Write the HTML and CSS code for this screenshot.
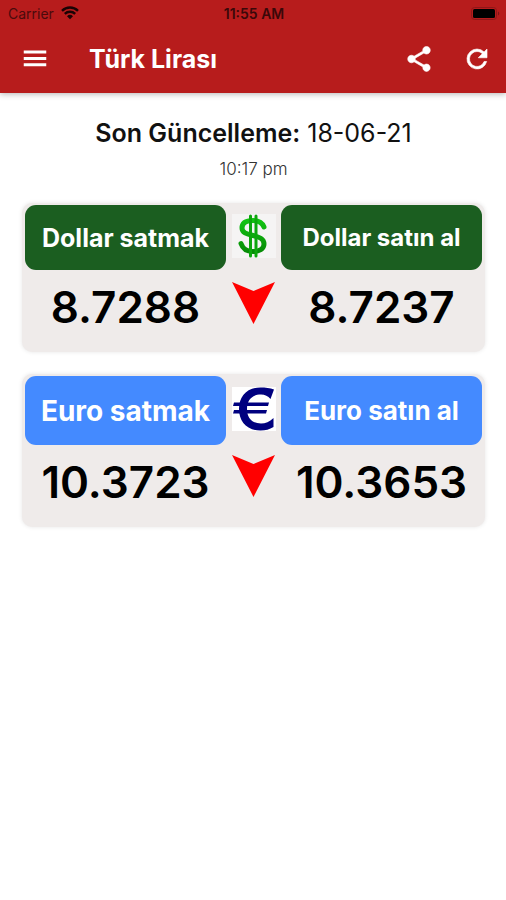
FILE: index.html
```html
<!DOCTYPE html>
<html lang="tr">
<head>
  <meta charset="UTF-8" />
  <meta name="viewport" content="width=device-width, initial-scale=1.0" />
  <title>Türk Lirası</title>
  <link rel="stylesheet" href="styles.css">
</head>
<body>
  <header class="header">
    <div class="status">
      <span class="carrier">
        Carrier
        <svg width="18" height="14" viewBox="0 0 18 14" aria-hidden="true">
          <path d="M1 4.800a11.500 11.500 0 0 1 16 0M3.800 7.800a7.500 7.500 0 0 1 10.400 0" fill="none" stroke="currentColor" stroke-width="2.400"/>
          <path d="M9 13.200L6 10.200a4.300 4.300 0 0 1 6 0z" fill="currentColor"/>
        </svg>
      </span>
      <span class="time">11:55 AM</span>
      <svg class="battery" width="29" height="13" viewBox="0 0 29 13" aria-hidden="true">
        <rect x="0.5" y="0.5" width="25" height="12" rx="3" fill="none" stroke="#8f1719"/>
        <rect x="2" y="2" width="22" height="9" rx="1.5" fill="#000"/>
        <path d="M27 4.5v4a2.2 2.2 0 0 0 0-4z" fill="#7f1417"/>
      </svg>
    </div>

    <div class="toolbar">
      <button class="icon-btn" aria-label="Menü">
        <svg width="30" height="30" viewBox="0 0 24 24"><path d="M3 17.800h18v-2.400H3zM3 12.700h18v-2.400H3zM3 5.200v2.400h18V5.200z"/></svg>
      </button>
      <h1>Türk Lirası</h1>
      <button class="icon-btn" aria-label="Paylaş">
        <svg class="bold" width="30" height="30" viewBox="0 0 24 24"><path d="M18 16.080c-.76 0-1.440.3-1.960.77L8.910 12.700c.05-.23.09-.46.09-.7s-.04-.47-.09-.7l7.050-4.110c.54.5 1.250.81 2.040.81 1.660 0 3-1.340 3-3s-1.340-3-3-3-3 1.340-3 3c0 .24.04.47.09.7L8.040 9.810C7.500 9.310 6.790 9 6 9c-1.660 0-3 1.340-3 3s1.340 3 3 3c.79 0 1.500-.31 2.040-.81l7.120 4.160c-.05.21-.08.43-.08.65 0 1.610 1.310 2.920 2.920 2.920s2.920-1.310 2.920-2.920-1.310-2.920-2.920-2.920z"/></svg>
      </button>
      <button class="icon-btn" aria-label="Yenile">
        <svg class="bold" width="30" height="30" viewBox="0 0 24 24"><path d="M17.650 6.350A7.958 7.958 0 0 0 12 4a8 8 0 1 0 7.730 10h-2.080A6 6 0 1 1 12 6c1.660 0 3.140.69 4.220 1.780L13 11h7V4l-2.350 2.350z"/></svg>
      </button>
    </div>
  </header>

  <main>
    <p class="updated"><strong>Son Güncelleme:</strong> 18-06-21</p>
    <p class="updated-time">10:17 pm</p>

    <section class="card card-dollar">
      <div class="side">
        <button class="btn btn-sell">Dollar satmak</button>
        <span class="rate">8.7288</span>
      </div>
      <div class="middle">
        <svg class="symbol" width="44" height="44" viewBox="0 0 44 44" role="img" aria-label="Dollar">
          <defs>
            <linearGradient id="green" x1="0" y1="0" x2="0" y2="1">
              <stop offset="0" stop-color="#12c312"/>
              <stop offset="1" stop-color="#078c07"/>
            </linearGradient>
          </defs>
          <path d="M32 13C30 8 26 6.500 21 6.500c-6 0-11 2-11 7.500 0 5 5 6 11 7.500s11 3 11 8.500c0 5-5 7.500-11 7.500-6 0-10-2-12-8" fill="none" stroke="url(#green)" stroke-width="5" stroke-linecap="round"/>
          <path d="M18.500 2v40M24 2v40" fill="none" stroke="#0ca60c" stroke-width="3" stroke-linecap="round"/>
        </svg>
        <svg class="arrow" width="43" height="43" viewBox="0 0 43 43" role="img" aria-label="Düşüş"><path d="M0 0l21.500 9L43 0 21.500 42z"/></svg>
      </div>
      <div class="side">
        <button class="btn btn-buy">Dollar satın al</button>
        <span class="rate">8.7237</span>
      </div>
    </section>

    <section class="card card-euro">
      <div class="side">
        <button class="btn btn-sell">Euro satmak</button>
        <span class="rate">10.3723</span>
      </div>
      <div class="middle">
        <svg class="symbol" width="44" height="44" viewBox="0 0 44 44" role="img" aria-label="Euro">
          <path d="M42 2.500L38.500 12C36 9 33 7.500 29 7.500 20 7.500 15 13 15 22s5 14.500 14 14.500c4.500 0 8.500-1.500 12.500-5.500v9c-4 2.500-8 3.500-13 3.500C14.500 43.500 7 34 7 22S14.500.5 28.500.5c5 0 9.500.5 13.500 2z" fill="#00007f"/>
          <path d="M2 15.500h35l-1 3.500H1zM2 23h33l-1 3.500H1z" fill="#00007f"/>
        </svg>
        <svg class="arrow" width="43" height="43" viewBox="0 0 43 43" role="img" aria-label="Düşüş"><path d="M0 0l21.500 9L43 0 21.500 42z"/></svg>
      </div>
      <div class="side">
        <button class="btn btn-buy">Euro satın al</button>
        <span class="rate">10.3653</span>
      </div>
    </section>
  </main>
</body>
</html>
```

FILE: styles.css
```css
* {
  box-sizing: border-box;
}

body {
  margin: 0;
  background: #fff;
  color: #111;
  font-family: Inter, "Liberation Sans", sans-serif;
}

.header {
  background: #b71c1c;
  box-shadow: 0 1px 6px rgba(0, 0, 0, 0.3);
}

.status {
  display: grid;
  grid-template-columns: 1fr auto 1fr;
  align-items: center;
  height: 26px;
  padding: 0 6px 0 8px;
  font-size: 14px;
  color: #4a0b0c;
}

.carrier {
  display: flex;
  align-items: center;
  gap: 7px;
}

.carrier svg {
  color: #1a0304;
}

.time {
  font-weight: 600;
  color: #3a0809;
}

.battery {
  justify-self: end;
}

.toolbar {
  display: flex;
  align-items: center;
  height: 67px;
  padding: 0 14px 2px 20px;
}

h1 {
  flex: 1;
  margin: 0 0 0 39px;
  font-size: 25px;
  font-weight: 700;
  color: #fff;
}

.icon-btn {
  display: flex;
  padding: 0;
  border: none;
  background: none;
  cursor: pointer;
}

.icon-btn svg {
  fill: #fff;
}

.icon-btn .bold {
  stroke: #fff;
  stroke-width: 0.5;
}

.icon-btn + .icon-btn {
  margin-left: 28px;
}

main {
  padding: 24px 21px 24px 22px;
  text-align: center;
}

.updated {
  margin: 0;
  font-size: 25px;
  line-height: 32px;
}

.updated strong {
  font-weight: 600;
}

.updated-time {
  margin: 10px 0 24px;
  font-size: 17px;
  line-height: 20px;
  font-weight: 300;
  color: #333;
}

.card {
  display: grid;
  grid-template-columns: 1fr 55px 1fr;
  margin-bottom: 22px;
  padding: 2px 3px 20px;
  border-radius: 10px;
  background: #efebea;
  box-shadow: 0 0 4px rgba(0, 0, 0, 0.1);
}

.side {
  display: flex;
  flex-direction: column;
}

.btn {
  height: 65px;
  padding: 0;
  border: none;
  border-radius: 11px;
  background: #1b5e20;
  color: #fff;
  font-family: inherit;
  font-size: 25px;
  font-weight: 700;
  white-space: nowrap;
  cursor: pointer;
}

.btn-buy {
  font-size: 24px;
}

.card-euro .btn {
  height: 69px;
  background: #448aff;
}

.card-euro .btn-sell {
  font-size: 28px;
}

.card-euro .btn-buy {
  font-size: 26px;
}

.rate {
  margin-top: 12px;
  font-size: 44px;
  line-height: 50px;
  font-weight: 600;
  color: #000;
}

.middle {
  display: flex;
  flex-direction: column;
  align-items: center;
  padding-top: 9px;
}

.symbol {
  background: #f5f4f4;
}

.card-euro .middle {
  padding-top: 11px;
}

.card-euro .symbol {
  background: #fff;
}

.arrow {
  margin-top: 24px;
  fill: #f00;
}
```
